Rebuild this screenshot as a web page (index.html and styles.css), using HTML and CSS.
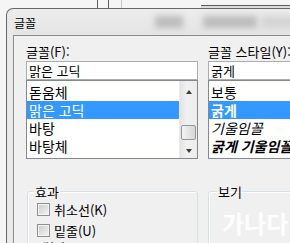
FILE: index.html
```html
<!DOCTYPE html>
<html lang="ko">
<head>
    <meta charset="UTF-8">
    <meta name="viewport" content="width=device-width, initial-scale=1.0">
    <title>글꼴</title>
    <link rel="stylesheet" href="styles.css">
</head>
<body>
    <div class="backdrop">
        <span class="edge e1"></span>
        <span class="edge e2"></span>
        <span class="edge e3"></span>
        <span class="behind"></span>
    </div>
    <div class="dialog">
        <div class="titlebar">
            <span class="title">글꼴</span>
            <span class="blur b1"></span>
            <span class="blur b2"></span>
            <span class="blur b3"></span>
        </div>
        <div class="client">
            <div class="pickers">
                <div class="picker picker-font">
                    <div class="label">글꼴(F):</div>
                    <div class="field">맑은 고딕</div>
                    <div class="listbox">
                        <ul class="items">
                            <li>돋움체</li>
                            <li class="selected">맑은 고딕</li>
                            <li>바탕</li>
                            <li>바탕체</li>
                        </ul>
                        <div class="scrollbar">
                            <span class="arrow up"></span>
                            <span class="thumb"></span>
                            <span class="arrow down"></span>
                        </div>
                    </div>
                </div>
                <div class="picker picker-style">
                    <div class="label">글꼴 스타일(Y):</div>
                    <div class="field">굵게</div>
                    <div class="listbox">
                        <ul class="items">
                            <li>보통</li>
                            <li class="selected bold">굵게</li>
                            <li class="italic">기울임꼴</li>
                            <li class="bold italic">굵게 기울임꼴</li>
                        </ul>
                    </div>
                </div>
            </div>
            <div class="groups">
                <fieldset class="group effects">
                    <legend>효과</legend>
                    <div class="check"><span class="box"></span>취소선(K)</div>
                    <div class="check"><span class="box"></span>밑줄(U)</div>
                    <div class="color-label">색(C):</div>
                </fieldset>
                <fieldset class="group preview">
                    <legend>보기</legend>
                    <div class="sample">가나다</div>
                </fieldset>
            </div>
        </div>
    </div>
</body>
</html>
```

FILE: styles.css
```css
html {
    overflow: hidden;
    background-color: #f5f5f5;
}

body {
    margin: 0;
    width: 290px;
    height: 243px;
    overflow: hidden;
    font-family: "Noto Sans CJK KR", "Noto Sans", sans-serif;
    font-size: 13px;
    color: #000;
}

/* windows behind the dialog */
.backdrop {
    display: flex;
    height: 8px;
}

.edge {
    flex-shrink: 0;
    width: 1px;
    background-color: #5c5c5c;
}

.e1 { margin-left: 97px; }
.e2 { margin-left: 10px; }
.e3 { margin-left: 12px; background-color: #b9c9d9; }

.behind {
    flex-shrink: 0;
    margin-left: auto;
    margin-top: 5px;
    width: 89px;
    height: 2px;
    border-top: 1px solid #5a5a5a;
    background-color: #dcdcdc;
}

/* dialog frame */
.dialog {
    width: 400px;
    height: 240px;
    margin-left: 6px;
    padding-left: 6px;
    border-top: 1px solid #686868;
    border-left: 1px solid #686868;
    border-top-left-radius: 7px;
    background-color: #e9e9e9;
}

.titlebar {
    display: flex;
    align-items: center;
    height: 26px;
    padding-left: 1px;
    overflow: hidden;
    background: linear-gradient(#ededed, #e4e4e4);
}

.title {
    flex-shrink: 0;
    width: 30px;
    font-size: 12px;
    line-height: 16px;
    padding-top: 2px;
}

.blur {
    flex-shrink: 0;
    height: 12px;
    background-color: #bcbcbc;
    filter: blur(3px);
}

.b1 { margin-left: 111px; width: 28px; }
.b2 { margin-left: 20px; width: 54px; }
.b3 { margin-left: 4px; width: 36px; background-color: #d4d4d4; }

.client {
    height: 100%;
    padding: 7px 0 0 12px;
    border-top: 1px solid #8b8b8b;
    border-left: 1px solid #8b8b8b;
    background-color: #f0f0f0;
}

/* font / style pickers */
.pickers {
    display: flex;
    gap: 10px;
}

.picker {
    flex-shrink: 0;
}

.picker-font {
    width: 172px;
}

.picker-style {
    width: 200px;
}

.label {
    line-height: 17px;
    margin-bottom: 1px;
    white-space: nowrap;
}

.field {
    box-sizing: border-box;
    height: 19px;
    padding: 0 2px;
    line-height: 17px;
    border: 1px solid #abadb3;
    background-color: #fff;
    white-space: nowrap;
}

.listbox {
    display: flex;
    box-sizing: border-box;
    height: 79px;
    border: 1px solid #828790;
    background-color: #fff;
}

.items {
    flex: 1;
    margin: 0;
    padding: 2px 0 0;
    list-style: none;
}

.items li {
    height: 18px;
    padding-left: 2px;
    font-size: 14px;
    line-height: 18px;
    white-space: nowrap;
}

.items .selected {
    background-color: #3399ff;
    color: #fff;
}

.bold { font-weight: bold; }
.italic { font-style: italic; }

.scrollbar {
    display: flex;
    flex-direction: column;
    align-items: center;
    flex-shrink: 0;
    box-sizing: border-box;
    width: 18px;
    border-left: 1px solid #eaeaea;
    background: linear-gradient(to right, #e3e3e3, #f1f1f1 40%, #ececec);
}

.arrow {
    width: 0;
    height: 0;
    border-left: 3px solid transparent;
    border-right: 3px solid transparent;
}

.arrow.up {
    margin-top: 9px;
    border-bottom: 4px solid #3c3c3c;
}

.arrow.down {
    margin-top: 9px;
    border-top: 4px solid #3c3c3c;
}

.thumb {
    box-sizing: border-box;
    width: 15px;
    height: 15px;
    margin-top: 31px;
    border: 1px solid #979797;
    border-radius: 2px;
    background: linear-gradient(to right, #f4f4f4, #e4e4e4 50%, #d6d6d6);
}

/* group boxes */
.groups {
    display: flex;
    gap: 10px;
    margin-top: 24px;
    margin-left: 1px;
}

.group {
    flex-shrink: 0;
    box-sizing: border-box;
    min-width: 0;
    margin: 0;
    padding: 1px 6px 0;
    border: 1px solid #d5dfe5;
    border-radius: 3px;
    box-shadow: inset 1px 1px 0 #fff;
    height: 80px;
}

.group legend {
    padding: 0 1px;
    line-height: 17px;
}

.effects {
    width: 171px;
}

.preview {
    width: 160px;
}

.preview legend {
    margin-left: 2px;
}

.check {
    display: flex;
    align-items: flex-start;
    gap: 4px;
    height: 21px;
    padding-left: 3px;
    line-height: 17px;
    white-space: nowrap;
}

.box {
    flex-shrink: 0;
    box-sizing: border-box;
    width: 13px;
    height: 13px;
    margin-top: 2px;
    border: 1px solid #8f8f8f;
    box-shadow: inset 0 0 0 1px #f4f4f4;
    background: linear-gradient(135deg, #cbcbcb, #f3f3f3);
}

.color-label {
    margin-top: -4px;
    padding-left: 3px;
    line-height: 17px;
}

.sample {
    margin-top: 7px;
    padding-left: 7px;
    font-size: 24px;
    font-weight: bold;
    line-height: 30px;
    color: #fdfdfd;
    white-space: nowrap;
}
```
